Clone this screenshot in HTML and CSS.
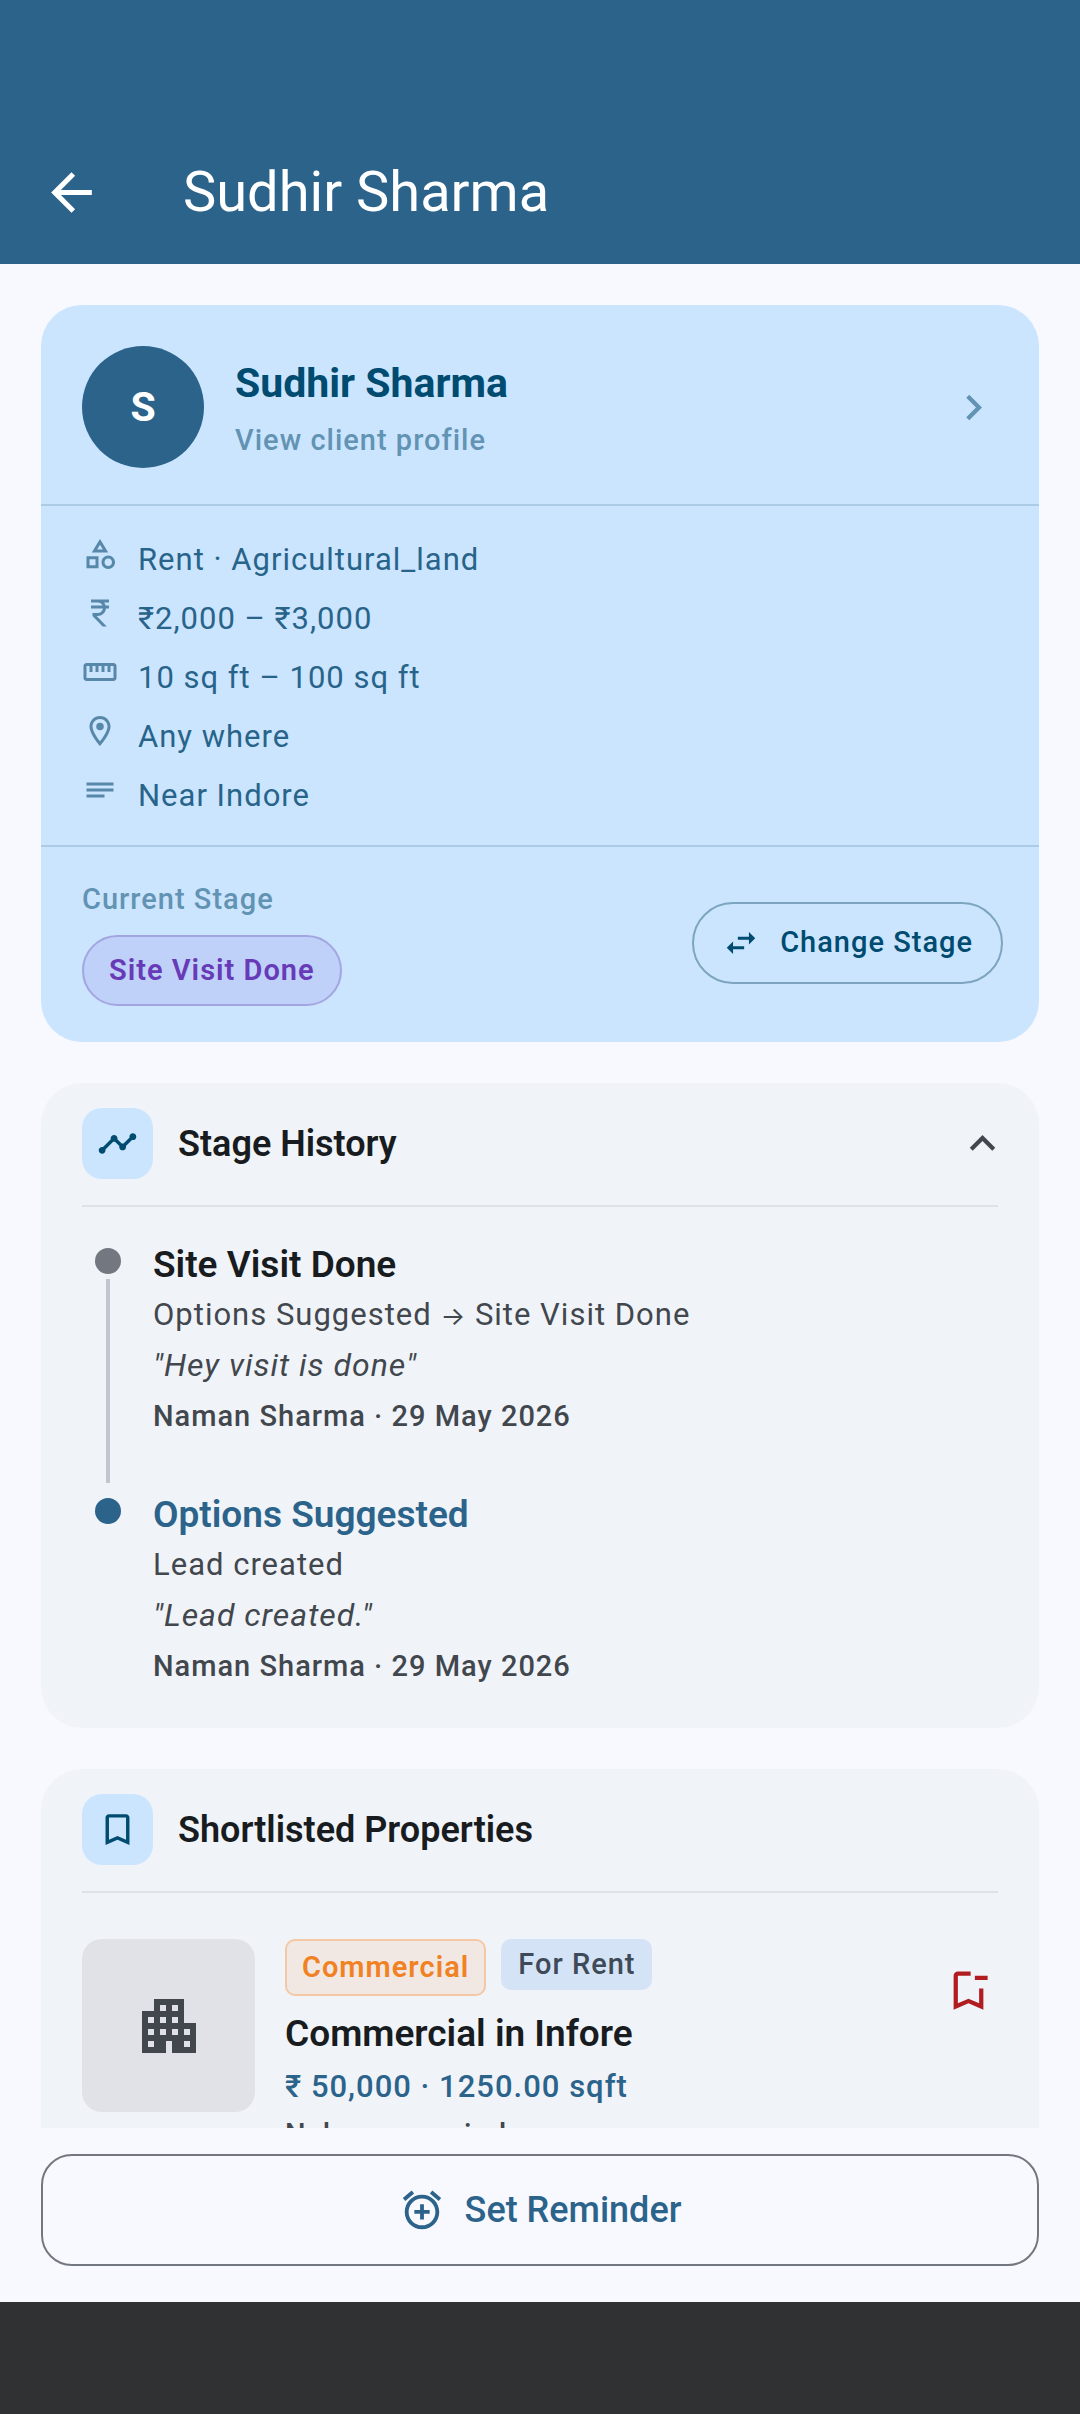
FILE: index.html
```html
<!DOCTYPE html>
<html lang="en">
<head>
<meta charset="utf-8">
<meta name="viewport" content="width=device-width, initial-scale=1">
<title>Sudhir Sharma</title>
<link rel="stylesheet" href="styles.css">
</head>
<body>
<header class="app-bar">
  <button class="icon-button back" type="button" aria-label="Back">
    <svg class="icon icon-xl" viewBox="0 0 24 24"><path d="M20 11H7.83l5.59-5.59L12 4l-8 8 8 8 1.41-1.41L7.83 13H20v-2z"/></svg>
  </button>
  <h1 class="app-title">Sudhir Sharma</h1>
</header>

<main class="content">
  <section class="card lead">
    <a class="client" href="#client">
      <span class="avatar">S</span>
      <span class="client-text">
        <span class="client-name">Sudhir Sharma</span>
        <span class="label client-hint">View client profile</span>
      </span>
      <svg class="icon icon-lg" viewBox="0 0 24 24"><path d="M10 6L8.59 7.41 13.17 12l-4.58 4.59L10 18l6-6z"/></svg>
    </a>
    <ul class="facts">
      <li class="fact">
        <svg class="icon icon-sm" viewBox="0 0 24 24"><path d="M12 2l-5.5 9h11L12 2zm0 3.84L13.93 9h-3.87L12 5.84zM17.5 13c-2.49 0-4.5 2.01-4.5 4.5s2.01 4.5 4.5 4.5 4.5-2.01 4.5-4.5-2.01-4.5-4.5-4.5zm0 7c-1.38 0-2.5-1.12-2.5-2.5s1.12-2.5 2.5-2.5 2.5 1.12 2.5 2.5-1.12 2.5-2.5 2.5zM3 21.5h8v-8H3v8zm2-6h4v4H5v-4z"/></svg>
        <span class="body">Rent · Agricultural_land</span>
      </li>
      <li class="fact">
        <svg class="icon icon-sm" viewBox="0 0 24 24"><path d="M13.66 7c-.56-1.18-1.76-2-3.16-2H6V3h12v2h-3.26c.48.58.84 1.26 1.05 2H18v2h-2.02c-.25 2.8-2.61 5-5.48 5h-.73l6.73 7h-2.77L7 14v-2h3.5c1.76 0 3.22-1.3 3.46-3H6V7h7.66z"/></svg>
        <span class="body">₹2,000 – ₹3,000</span>
      </li>
      <li class="fact">
        <svg class="icon icon-sm" viewBox="0 0 24 24"><path d="M21 6H3c-1.1 0-2 .9-2 2v8c0 1.1.9 2 2 2h18c1.1 0 2-.9 2-2V8c0-1.1-.9-2-2-2zm0 10H3V8h2v4h2V8h2v4h2V8h2v4h2V8h2v4h2V8h2v8z"/></svg>
        <span class="body">10 sq ft – 100 sq ft</span>
      </li>
      <li class="fact">
        <svg class="icon icon-sm" viewBox="0 0 24 24"><path d="M12 2C8.13 2 5 5.13 5 9c0 5.25 7 13 7 13s7-7.75 7-13c0-3.87-3.13-7-7-7zM7 9c0-2.76 2.24-5 5-5s5 2.24 5 5c0 2.88-2.88 7.19-5 9.88C9.92 16.21 7 11.85 7 9z"/><circle cx="12" cy="9" r="2.5"/></svg>
        <span class="body">Any where</span>
      </li>
      <li class="fact">
        <svg class="icon icon-sm" viewBox="0 0 24 24"><path d="M15 15H3v2h12v-2zm6-8H3v2h18V7zm0 4H3v2h18v-2z"/></svg>
        <span class="body">Near Indore</span>
      </li>
    </ul>
    <div class="stage">
      <div class="stage-current">
        <span class="label stage-label">Current Stage</span>
        <span class="label stage-pill">Site Visit Done</span>
      </div>
      <button class="label change-stage" type="button">
        <svg class="icon icon-swap" viewBox="0 0 24 24"><path d="M6.99 11L3 15l3.99 4v-3H14v-2H6.99v-3zM21 9l-3.99-4v3H10v2h7.01v3L21 9z"/></svg>
        Change Stage
      </button>
    </div>
  </section>

  <section class="card">
    <div class="section-head">
      <span class="tile"><svg class="icon icon-md" viewBox="0 0 24 24"><path d="M23 8c0 1.1-.9 2-2 2-.18 0-.35-.02-.51-.07l-3.56 3.55c.05.16.07.34.07.52 0 1.1-.9 2-2 2s-2-.9-2-2c0-.18.02-.36.07-.52l-2.55-2.55c-.16.05-.34.07-.52.07s-.36-.02-.52-.07l-4.55 4.56c.05.16.07.33.07.51 0 1.1-.9 2-2 2s-2-.9-2-2 .9-2 2-2c.18 0 .35.02.51.07l4.56-4.55C8.02 9.36 8 9.18 8 9c0-1.1.9-2 2-2s2 .9 2 2c0 .18-.02.36-.07.52l2.55 2.55c.16-.05.34-.07.52-.07s.36.02.52.07l3.55-3.56C19.02 8.35 19 8.18 19 8c0-1.1.9-2 2-2s2 .9 2 2z"/></svg></span>
      <h2 class="title section-title">Stage History</h2>
      <button class="icon-button collapse" type="button" aria-label="Collapse" aria-expanded="true">
        <svg class="icon icon-lg" viewBox="0 0 24 24"><path d="M12 8l-6 6 1.41 1.41L12 10.83l4.59 4.58L18 14z"/></svg>
      </button>
    </div>
    <hr class="rule">
    <ol class="timeline">
      <li class="event">
        <span class="marker"><span class="dot"></span><span class="line"></span></span>
        <div class="event-text">
          <h3 class="title item-title">Site Visit Done</h3>
          <p class="body">Options Suggested <span class="arrow">→</span> Site Visit Done</p>
          <p class="body quote">"Hey visit is done"</p>
          <p class="label author">Naman Sharma · 29 May 2026</p>
        </div>
      </li>
      <li class="event">
        <span class="marker"><span class="dot dot-first"></span></span>
        <div class="event-text">
          <h3 class="title item-title event-first">Options Suggested</h3>
          <p class="body">Lead created</p>
          <p class="body quote">"Lead created."</p>
          <p class="label author">Naman Sharma · 29 May 2026</p>
        </div>
      </li>
    </ol>
  </section>

  <section class="card">
    <div class="section-head">
      <span class="tile"><svg class="icon icon-md" viewBox="0 0 24 24"><path d="M17 3H7c-1.1 0-2 .9-2 2v16l7-3 7 3V5c0-1.1-.9-2-2-2zm0 15l-5-2.18L7 18V5h10v13z"/></svg></span>
      <h2 class="title section-title">Shortlisted Properties</h2>
    </div>
    <hr class="rule">
    <article class="property">
      <div class="thumb"><svg class="icon icon-building" viewBox="0 0 24 24"><path d="M17 11V3H7v4H3v14h8v-4h2v4h8V11h-4zM7 19H5v-2h2v2zm0-4H5v-2h2v2zm0-4H5V9h2v2zm4 4H9v-2h2v2zm0-4H9V9h2v2zm0-4H9V5h2v2zm4 8h-2v-2h2v2zm0-4h-2V9h2v2zm0-4h-2V5h2v2zm4 12h-2v-2h2v2zm0-4h-2v-2h2v2z"/></svg></div>
      <div class="property-text">
        <div class="chips">
          <span class="label chip chip-type">Commercial</span>
          <span class="label chip chip-deal">For Rent</span>
        </div>
        <h3 class="title item-title">Commercial in Infore</h3>
        <p class="body price">₹ 50,000 · 1250.00 sqft</p>
        <p class="label address">Nehru nagar indore</p>
      </div>
      <button class="icon-button remove" type="button" aria-label="Remove from shortlist">
        <svg class="icon icon-lg" viewBox="0 0 24 24"><path d="M17 11v6.97l-5-2.14-5 2.14V5h6V3H7c-1.1 0-2 .9-2 2v16l7-3 7 3V11h-2zm4-4h-6V5h6v2z"/></svg>
      </button>
    </article>
  </section>
</main>

<footer class="actions">
  <button class="title reminder" type="button">
    <svg class="icon icon-alarm" viewBox="0 0 24 24"><path d="M7.88 3.39L6.6 1.86 2 5.71l1.29 1.53 4.59-3.85zM22 5.72l-4.6-3.86-1.29 1.53 4.6 3.86L22 5.72zM12 4c-4.97 0-9 4.03-9 9s4.02 9 9 9c4.97 0 9-4.03 9-9s-4.03-9-9-9zm0 16c-3.87 0-7-3.13-7-7s3.13-7 7-7 7 3.13 7 7-3.13 7-7 7zm1-11h-2v3H8v2h3v3h2v-3h3v-2h-3V9z"/></svg>
    Set Reminder
  </button>
</footer>
<div class="system-nav"></div>
</body>
</html>
```
FILE: styles.css
```css
:root {
  --primary: #2c638b;
  --primary-container: #cce5ff;
  --on-container: #004b70;
  --surface: #f8f9ff;
  --card: #f0f4f9;
  --ink: #181c20;
  --ink-soft: #42474e;
  --edge: 41px;
}

* { box-sizing: border-box; }

html, body { height: 100%; }

body {
  margin: 0;
  display: flex;
  flex-direction: column;
  background: var(--surface);
  color: var(--ink);
  font-family: Roboto, "Noto Sans", sans-serif;
}

h1, h2, h3, p, ul, ol { margin: 0; padding: 0; }
ul, ol { list-style: none; }

button {
  font-family: inherit;
  background: none;
  border: 0;
  margin: 0;
  padding: 0;
  cursor: pointer;
}

/* Icons */
.icon { display: block; flex: none; fill: currentColor; }
.icon-sm { width: 36px; height: 36px; }
.icon-swap { width: 38px; height: 38px; }
.icon-md { width: 41px; height: 41px; }
.icon-alarm { width: 46px; height: 46px; }
.icon-lg { width: 51px; height: 51px; }
.icon-xl { width: 61px; height: 61px; }
.icon-building { width: 72px; height: 72px; }
.icon-button { flex: none; color: inherit; }

/* Text */
.title { font-size: 36px; line-height: 53px; font-weight: 500; }
.section-title { font-weight: 600; }
.item-title { font-size: 37px; font-weight: 600; color: var(--ink); }
.body { font-size: 31px; line-height: 41px; font-weight: 400; letter-spacing: 1px; }
.label { font-size: 29px; line-height: 41px; font-weight: 500; letter-spacing: 1px; }

/* App bar */
.app-bar {
  flex: none;
  display: flex;
  align-items: center;
  gap: 81px;
  padding: 120px var(--edge) 0;
  height: 264px;
  background: var(--primary);
  color: #fff;
}
.app-title { font-size: 56px; line-height: 72px; font-weight: 400; }

/* Scrolling area */
.content {
  flex: 1;
  min-height: 0;
  overflow-y: auto;
  scrollbar-width: none;
  display: flex;
  flex-direction: column;
  gap: var(--edge);
  padding: var(--edge);
}
.card {
  flex: none;
  background: var(--card);
  border-radius: 41px;
}

/* Lead summary */
.lead { background: var(--primary-container); color: var(--on-container); }
.client {
  display: flex;
  align-items: center;
  gap: 31px;
  padding: 41px 40px 36px 41px;
  color: #6293b3;
  text-decoration: none;
}
.avatar {
  flex: none;
  width: 122px;
  height: 122px;
  border-radius: 50%;
  display: grid;
  place-items: center;
  background: var(--primary);
  color: #fff;
  font-size: 41px;
  font-weight: 700;
}
.client-text { flex: 1; display: flex; flex-direction: column; gap: 6px; }
.client-name { font-size: 41px; line-height: 61px; font-weight: 700; color: var(--on-container); }
.facts {
  display: flex;
  flex-direction: column;
  gap: 12px;
  padding: 30px 41px 26px;
  border-top: 2px solid #abcbe7;
  border-bottom: 2px solid #abcbe7;
  color: #28648a;
}
.fact { display: flex; align-items: flex-start; gap: 20px; }
.fact .icon { color: #5788a9; }
.fact .body { line-height: 47px; }
.stage {
  display: flex;
  align-items: center;
  justify-content: space-between;
  padding: 32px 36px 36px 41px;
}
.stage-current { display: flex; flex-direction: column; align-items: flex-start; gap: 15px; }
.stage-label { color: #6293b3; }
.stage-pill {
  padding: 13px 25px;
  border: 2px solid #a3a5e0;
  border-radius: 36px;
  background: #c0d1f9;
  color: #673ab7;
  font-weight: 600;
}
.change-stage {
  display: flex;
  align-items: center;
  gap: 20px;
  height: 82px;
  padding: 0 28px;
  border: 2px solid #7da5c0;
  border-radius: 41px;
  color: var(--on-container);
}

/* Section cards */
.section-head {
  display: flex;
  align-items: center;
  gap: 25px;
  padding: 25px 31px 26px 41px;
}
.section-title { flex: 1; padding-top: 2px; }
.tile {
  flex: none;
  width: 71px;
  height: 71px;
  border-radius: 20px;
  display: grid;
  place-items: center;
  background: var(--primary-container);
  color: var(--on-container);
}
.collapse { color: var(--ink-soft); }
.rule { height: 2px; margin: 0 41px; border: 0; background: #dfe3e8; }

/* Stage history */
.timeline { padding: 31px 41px 41px; }
.event { display: flex; gap: 20px; }
.marker {
  flex: none;
  width: 51px;
  padding-top: 10px;
  display: flex;
  flex-direction: column;
  align-items: center;
  gap: 5px;
}
.dot { width: 26px; height: 26px; border-radius: 50%; background: #73777f; }
.dot-first { background: var(--primary); }
.line { flex: 1; width: 4px; margin-bottom: 5px; background: #c2c7cf; }
.event-text {
  display: flex;
  flex-direction: column;
  gap: 10px;
  padding-bottom: 51px;
  color: var(--ink-soft);
}
.event:last-child .event-text { padding-bottom: 0; }
.event-text .item-title { margin-bottom: -7px; }
.event-text .event-first { color: var(--primary); }
.arrow { font-family: Inter, sans-serif; font-size: 26px; line-height: 1; }
.quote { font-size: 32px; font-style: italic; }

/* Shortlisted property */
.property {
  display: flex;
  align-items: flex-start;
  gap: 30px;
  padding: 46px 20px 41px 41px;
}
.thumb {
  flex: none;
  width: 173px;
  height: 173px;
  border-radius: 20px;
  display: grid;
  place-items: center;
  background: #e0e2e8;
  color: var(--ink-soft);
}
.property-text { flex: 1; display: flex; flex-direction: column; gap: 6px; }
.chips { display: flex; align-items: flex-start; gap: 15px; margin-bottom: 5px; }
.chip { border-radius: 10px; padding: 5px 17px; }
.chip-type {
  padding: 6px 15px;
  border: 2px solid #f4c8a4;
  background: #f1e8e4;
  color: #f08223;
  font-weight: 600;
}
.chip-deal { background: #d5e3f6; color: #3f4a58; }
.price { color: var(--primary); font-weight: 500; }
.address { line-height: 43px; color: var(--ink-soft); }
.remove { padding: 26px 25px; color: #b01c20; }

/* Bottom action */
.actions { flex: none; padding: 26px var(--edge) 36px; }
.reminder {
  width: 100%;
  height: 112px;
  display: flex;
  align-items: center;
  justify-content: center;
  gap: 20px;
  border: 2px solid #73777f;
  border-radius: 31px;
  color: var(--primary);
}
.system-nav { flex: none; height: 112px; background: #303133; }
```
